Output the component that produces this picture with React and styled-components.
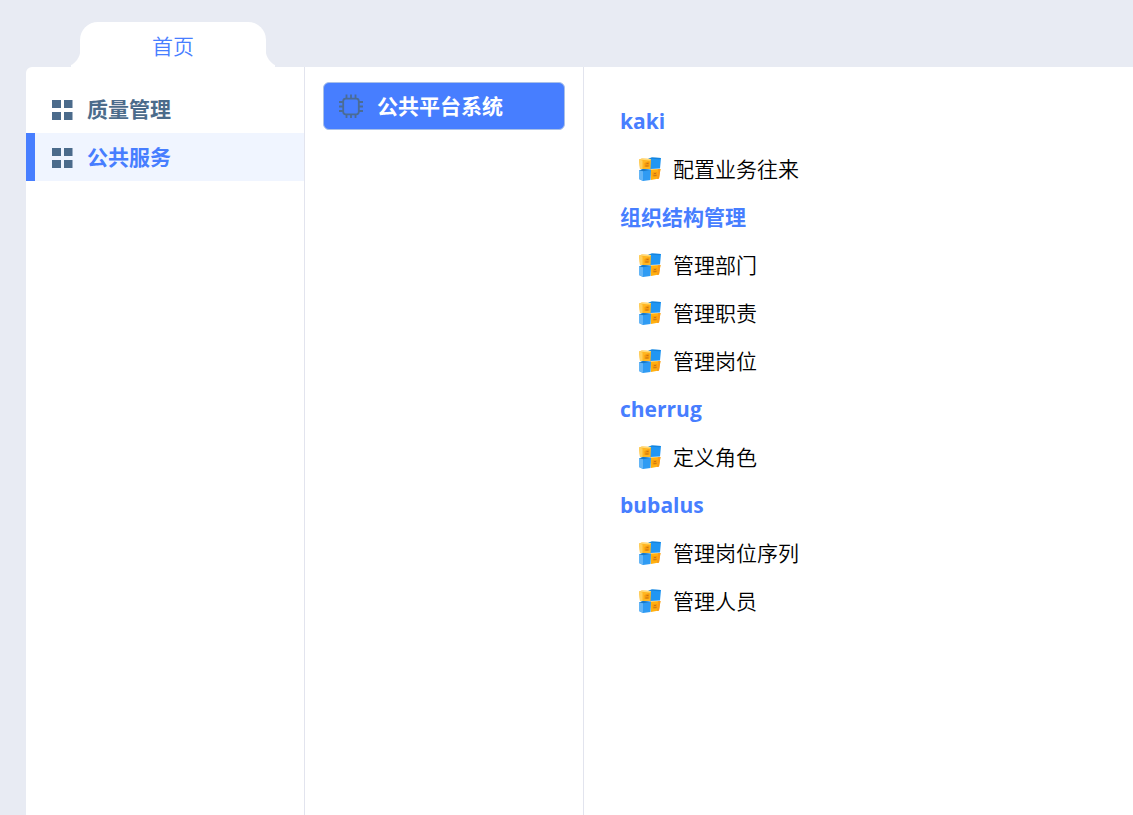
import React from "react";
import styled, { createGlobalStyle, css } from "styled-components";

const colors = {
  page: "#e8ebf3",
  primary: "#477eff",
  slate: "#4b6b8b",
  active: "#f0f5ff",
  line: "#e2e4ee"
};

const GlobalStyle = createGlobalStyle`
  * {
    box-sizing: border-box;
  }
  body {
    margin: 0;
    background: ${colors.page};
    font-family: "Open Sans", "Noto Sans CJK SC", sans-serif;
    font-size: 21px;
    line-height: 48px;
    color: #000;
  }
`;

const menus = [
  { name: "质量管理" },
  { name: "公共服务", active: true }
];

const groups = [
  { title: "kaki", items: ["配置业务往来"] },
  { title: "组织结构管理", items: ["管理部门", "管理职责", "管理岗位"] },
  { title: "cherrug", items: ["定义角色"] },
  { title: "bubalus", items: ["管理岗位序列", "管理人员"] }
];

const resetButton = css`
  border: none;
  padding: 0;
  font: inherit;
  text-align: left;
  cursor: pointer;
`;

const Page = styled.div`
  display: flex;
  flex-direction: column;
  min-height: 100vh;
  padding: 22px 0 0 26px;
`;

const TabBar = styled.nav`
  display: flex;
  padding-left: 54px;
`;

// curved foot on both sides of the tab
const foot = css`
  content: "";
  position: absolute;
  bottom: 0;
  width: 9px;
  height: 18px;
`;

const Tab = styled.button`
  ${resetButton}
  position: relative;
  width: 186px;
  height: 45px;
  padding-top: 2px;
  border-radius: 18px 18px 0 0;
  background: #fff;
  color: ${colors.primary};
  font-weight: 350;
  line-height: 40px;
  text-align: center;

  &::before {
    ${foot}
    left: -9px;
    background: radial-gradient(circle at -9px 0, transparent 18px, #fff 19px);
  }
  &::after {
    ${foot}
    right: -9px;
    background: radial-gradient(circle at 18px 0, transparent 18px, #fff 19px);
  }
`;

const Panel = styled.div`
  display: flex;
  flex: 1;
  border-top-left-radius: 6px;
  background: #fff;
`;

const Column = styled.div`
  flex: none;
  width: 279px;
  border-right: 1px solid ${colors.line};
`;

const Sidebar = styled(Column)`
  padding-top: 18px;
`;

const Systems = styled(Column)`
  padding: 15px 18px;
`;

const MenuItem = styled.button`
  ${resetButton}
  display: flex;
  align-items: center;
  gap: 14px;
  width: 100%;
  height: 48px;
  padding-left: 16px;
  border-left: 9px solid ${p => (p.$active ? colors.primary : "transparent")};
  background: ${p => (p.$active ? colors.active : "transparent")};
  color: ${p => (p.$active ? colors.primary : colors.slate)};
  font-weight: 700;
`;

const SystemButton = styled.button`
  ${resetButton}
  display: flex;
  align-items: center;
  gap: 14px;
  width: 100%;
  height: 48px;
  padding-left: 15px;
  border: 1px solid #a9c0e8;
  border-radius: 6px;
  background: ${colors.primary};
  color: #fff;
  font-weight: 700;
`;

const Content = styled.main`
  flex: 1;
  padding: 30px 36px;
`;

const GroupTitle = styled.h2`
  margin: 0;
  color: ${colors.primary};
  font-size: 21px;
  font-weight: 700;
`;

const List = styled.ul`
  margin: 0;
  padding: 0 0 0 18px;
  list-style: none;
`;

const ItemLink = styled.a`
  display: flex;
  align-items: center;
  gap: 11px;
  height: 48px;
  color: inherit;
  font-weight: 350;
  text-decoration: none;
`;

const Icon = styled.svg`
  display: block;
  flex: none;
`;

const GridIcon = () => (
  <Icon width="22" height="22" viewBox="0 0 22 22" fill={colors.slate} aria-hidden="true">
    <path d="M1 2h9v8H1zM13 2h8.500v8H13zM1 14h9v8H1zM13 14h8.500v8H13z" />
  </Icon>
);

const ChipIcon = () => (
  <Icon
    width="24"
    height="24"
    viewBox="0 0 24 24"
    fill="none"
    stroke="#4b6c95"
    strokeWidth="1.8"
    aria-hidden="true"
  >
    <rect x="4.200" y="4.700" width="15.600" height="15.600" rx="2.500" />
    <path d="M7.500 .5v4M12 .5v4M16.500 .5v4M7.500 20.500V24M12 20.500V24M16.500 20.500V24M0 8h4M0 12.500h4M0 17h4M20 8h4M20 12.500h4M20 17h4" />
  </Icon>
);

const CubesIcon = () => (
  <Icon width="24" height="24" viewBox="0 0 24 24" aria-hidden="true">
    <path d="M10.500 1.500 14 .5l9 .5-1 10.500-10 .5-1.500-1z" fill="#2196f3" />
    <path d="M10.500 1.500 14 .5l9 .5-1.500 1.300z" fill="#1583dc" />
    <path d="M1 2.500 4 1.500l9 .5-.5 10L2 12z" fill="#ffb621" />
    <path d="m1 2.500 3-1 9 .5-1 1.500z" fill="#ffd978" />
    <path d="m1 2.500 3.500 1V12H2z" fill="#ffd05e" />
    <path d="M12 12.500 22.500 12l-1.500 9.500-8 1.500z" fill="#ffb010" />
    <path d="m20 12.200 2.500-.2-1.500 9.500-2 .5z" fill="#f99a1c" />
    <path d="m1 13.500 4-1.500 8 .8-.5 10.200L5 24l-4-2z" fill="#2f9bf3" />
    <path d="m1 13.500 4-1.500 8 .8-8 1.400z" fill="#1778c8" />
    <path d="m1 13.500 4 .8V24l-4-2z" fill="#64b5f6" />
    <path d="M6.500 10V6L10 4.500h1.500V9.500zM14.500 19.500v-4L19 15v4z" fill="#f59a0c" />
    <path d="M7.500 9h3M15.500 18.700h3M8.500 6.500h2M16 16.500h2" stroke="#c97412" strokeWidth="1" />
  </Icon>
);

const App = () => (
  <Page>
    <GlobalStyle />
    <TabBar>
      <Tab type="button">首页</Tab>
    </TabBar>
    <Panel>
      <Sidebar>
        {menus.map(menu => (
          <MenuItem key={menu.name} type="button" $active={menu.active}>
            <GridIcon />
            {menu.name}
          </MenuItem>
        ))}
      </Sidebar>
      <Systems>
        <SystemButton type="button">
          <ChipIcon />
          公共平台系统
        </SystemButton>
      </Systems>
      <Content>
        {groups.map(group => (
          <section key={group.title}>
            <GroupTitle>{group.title}</GroupTitle>
            <List>
              {group.items.map(item => (
                <li key={item}>
                  <ItemLink href="#">
                    <CubesIcon />
                    {item}
                  </ItemLink>
                </li>
              ))}
            </List>
          </section>
        ))}
      </Content>
    </Panel>
  </Page>
);

export default App;
